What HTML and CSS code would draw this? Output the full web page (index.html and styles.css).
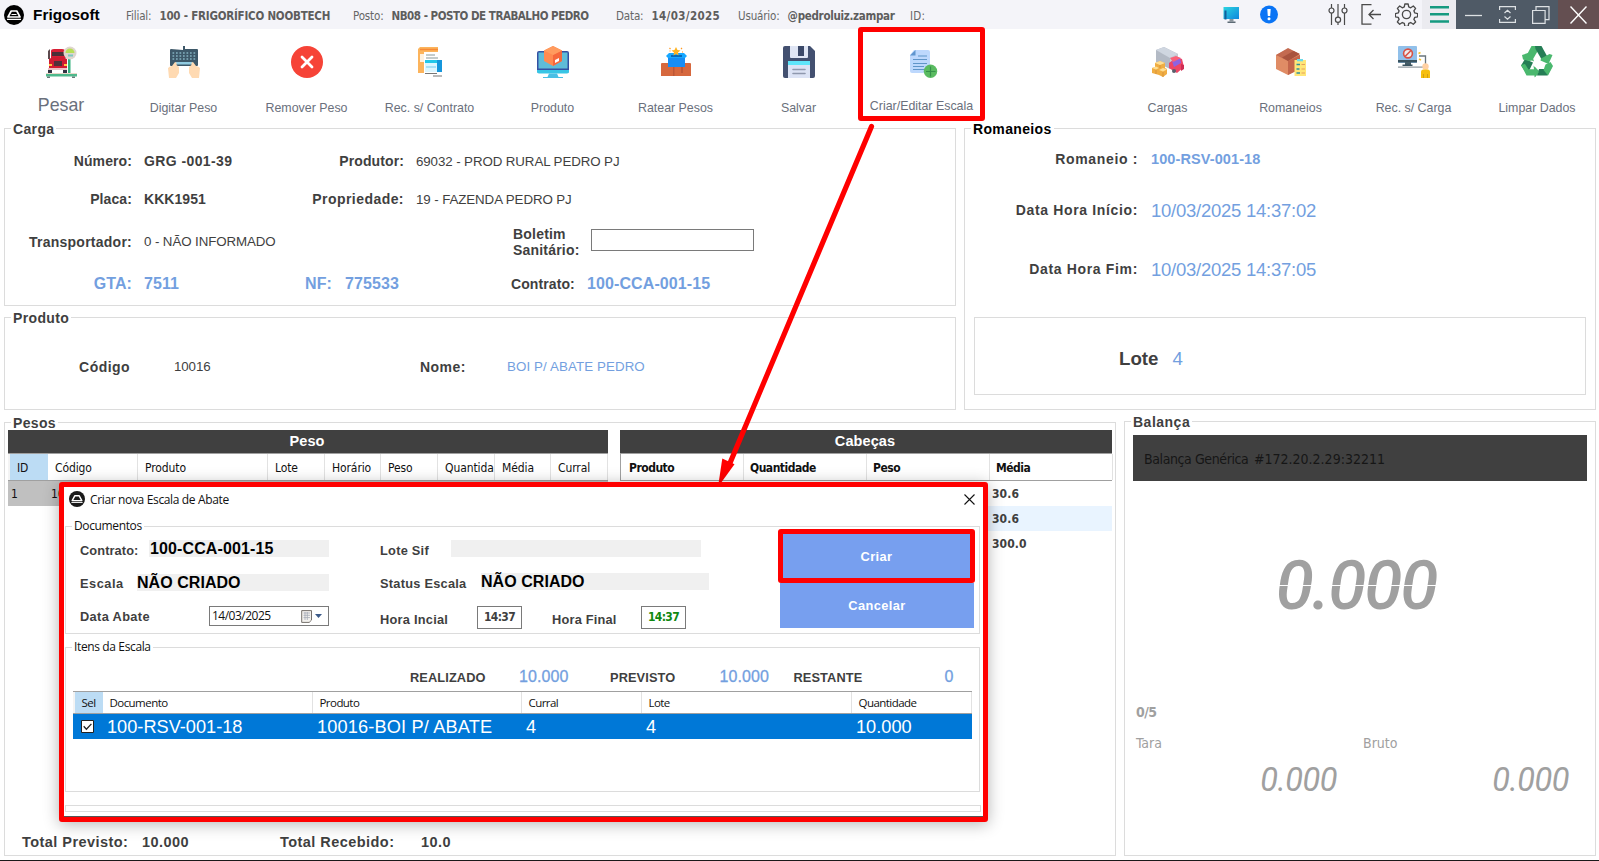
FILE: index.html
```html
<!DOCTYPE html>
<html lang="pt-BR">
<head>
<meta charset="utf-8">
<title>Frigosoft</title>
<link rel="stylesheet" href="styles.css">
</head>
<body>
<div class="app">
  <header class="topbar">
    <svg class="logo" viewBox="0 0 20 20"><circle cx="10" cy="10" r="10" fill="#000"/><path d="M7.200 6h5.600l3.200 6H4z" fill="none" stroke="#fff" stroke-width="1.700" stroke-linejoin="round"/><path d="M7.500 9.500h5M3 14.300h14" stroke="#fff" stroke-width="1.200"/></svg>
    <span class="brand">Frigosoft</span>
    <div class="info info-filial"><span>Filial:</span><b>100 - FRIGORÍFICO NOOBTECH</b></div>
    <div class="info info-posto"><span>Posto:</span><b>NB08 - POSTO DE TRABALHO PEDRO</b></div>
    <div class="info info-data"><span>Data:</span><b>14/03/2025</b></div>
    <div class="info info-user"><span>Usuário:</span><b>@pedroluiz.zampar</b></div>
    <div class="info info-id"><span>ID:</span></div>
    <div class="controls">
      <i class="ctl w37"><svg width="17" height="16" viewBox="0 0 17 16"><defs><linearGradient id="scr" x2="1" y2="1"><stop offset="0" stop-color="#2bd4e0"/><stop offset="1" stop-color="#0f86dd"/></linearGradient></defs><path d="M.5 0h15.500v12H.5z" fill="url(#scr)"/><path d="M1.500 3.500h2v9h-2z" fill="#125f9c"/><path d="M6.500 12h4v2.500h-4z" fill="#8a949c"/><path d="M4.500 14.500h8V16h-8z" fill="#5c6a75"/></svg></i>
      <i class="ctl w68"><svg width="18" height="19" viewBox="0 0 18 19"><circle cx="9" cy="9.500" r="9" fill="#0a74f5"/><path d="M7.300 4h3.400l-.5 7H7.800z" fill="#fff"/><circle cx="9" cy="13.800" r="1.500" fill="#fff"/></svg></i>
      <i class="ctl w33"><svg width="20" height="21" viewBox="0 0 20 21" fill="none" stroke="#4a4a4a" stroke-width="1.200"><path d="M3.500 0v4M3.500 9v12M10 0v13M10 18.500v2.500M16.500 0v4M16.500 9v12"/><circle cx="3.500" cy="6.500" r="2.500"/><circle cx="10" cy="15.700" r="2.600"/><circle cx="16.500" cy="6.500" r="2.500"/></svg></i>
      <i class="ctl w34"><svg width="21" height="21" viewBox="0 0 21 21" fill="none" stroke="#4a4a4a" stroke-width="1.300"><path d="M10.500.7H1v19.500h9.500M20 10.500H8M12.500 6L8 10.500l4.500 4.500"/></svg></i>
      <i class="ctl w27"><svg width="23" height="23" viewBox="0 0 24 24" fill="none" stroke="#4a4a4a" stroke-width="1.400" stroke-linejoin="round"><circle cx="12" cy="12" r="4.300"/><path d="M10.300 1h3.400l.6 3.100 2.100.9 2.700-1.800 2.400 2.400-1.800 2.600.9 2.200 3 .6v3.400l-3 .6-.9 2.200 1.800 2.600-2.400 2.400-2.700-1.800-2.100.9-.6 3.100h-3.400l-.6-3.100-2.100-.9-2.700 1.800-2.400-2.400 1.800-2.600-.9-2.200-3-.6V11l3-.6.9-2.200-1.800-2.600 2.400-2.400 2.700 1.800 2.100-.9z"/></svg></i>
      <i class="ctl menu"><svg width="19" height="17" viewBox="0 0 19 17"><path d="M0 1.250h19M0 8.250h19M0 15.500h19" stroke="#159a80" stroke-width="2.500"/></svg></i>
      <i class="ctl win"><svg width="17" height="18" viewBox="0 0 17 18"><path d="M0 9.500h17" stroke="#dde1e4" stroke-width="1.300"/></svg></i>
      <i class="ctl win"><svg width="17" height="18" viewBox="0 0 17 18" fill="none" stroke="#dde1e4" stroke-width="1.200"><path d="M.6 4V.6h15.800V4M.6 13v3.400h15.800V13M5.500 7l3-2.800 3 2.800M5.500 10.500l3 2.800 3-2.800"/></svg></i>
      <i class="ctl win"><svg width="18" height="18" viewBox="0 0 18 18" fill="none" stroke="#dde1e4" stroke-width="1.200"><path d="M.6 4.500h12.500v12.800H.6zM4 4.500V.6h13v13h-4"/></svg></i>
      <i class="ctl close"><svg width="17" height="18" viewBox="0 0 17 18"><path d="M.5.5l16 17M16.500.5l-16 17" stroke="#fff" stroke-width="1.400"/></svg></i>
    </div>
  </header>

  <nav class="toolbar">
    <div class="tool tool-big">
      <svg viewBox="0 0 32 32"><path d="M3 5l2-2v10H3zM20 3l2 2v7h-2z" fill="#5c4a4e"/><path d="M6 5q0-2 3-2h8q3 0 3 2v8H6z" fill="#d81f35"/><path d="M7 6h12v4H7z" fill="#4a3038"/><path d="M4 13l4-2h10l4 2v11H4z" fill="#d01c32"/><path d="M9 15h8v5H9z" fill="#50303a"/><path d="M4 18h3v2H4zM19 18h3v2h-3z" fill="#ffc83d"/><path d="M3 22h19v2H3z" fill="#edc0c4"/><path d="M3 24h4v3H3zM18 24h4v3h-4z" fill="#334"/><path d="M23 13h2.500v15H23z" fill="#34b07d"/><circle cx="25" cy="7" r="6.500" fill="#e0d6d0"/><path d="M20.500 7a4.500 4.500 0 0 1 9 0z" fill="#b8df58"/><path d="M23 8.500h5v2h-5z" fill="#7cc9bf"/><path d="M1 27h31v1H1z" fill="#e8d8c8"/><path d="M1 28h31v2.500H1z" fill="#4eb98d"/><path d="M2 30.500h3V32H2zM27 30.500h3V32h-3z" fill="#667b78"/></svg>
      <span>Pesar</span>
    </div>
    <div class="tool">
      <svg viewBox="0 0 32 32"><path d="M15 4V0h2v3h12q1 0 1 1v15q0 1-1 1H3q-1 0-1-1V4q0-1 1-1z" fill="#3d5869"/><path d="M4.500 7h23M4.500 10h23M4.500 13h23" stroke="#a5dceb" stroke-width="1.200" stroke-dasharray="1.700 1.800"/><path d="M8 16h16v2.500H8z" fill="#91cbe0"/><path d="M0 22q2-2 4-2l3-4q2 0 1.500 3l2.500 2v6l-3 5H1zM32 22q-2-2-4-2l-3-4q-2 0-1.500 3l-2.500 2v6l3 5h7z" fill="#ffdab2"/></svg>
      <span>Digitar Peso</span>
    </div>
    <div class="tool">
      <svg viewBox="0 0 32 32"><circle cx="16" cy="16" r="16" fill="#f64337"/><path d="M11 11l10 10M21 11L11 21" stroke="#fff" stroke-width="2.800" stroke-linecap="round"/></svg>
      <span>Remover Peso</span>
    </div>
    <div class="tool">
      <svg viewBox="0 0 32 32"><path d="M4 3l2-2h18v6h2v20H4z" fill="#fcb45c"/><path d="M6 3.500h18" stroke="#f78a35" stroke-width="1.500"/><path d="M6 8h6v8H6z" fill="#fff2df"/><path d="M10 6h16v24H10z" fill="#fff"/><path d="M12 9h9M12 12h12" stroke="#899" stroke-width="1"/><path d="M11 14h17v12H11z" fill="#dcf6ff"/><path d="M11 15.500h17" stroke="#22c7e8" stroke-width="3"/><path d="M23 14h5v12h-5z" fill="#1596dc"/><path d="M12 21h10" stroke="#75c9ed"/><path d="M11 27.500h12M19 30h9" stroke="#777" stroke-width="1.200"/></svg>
      <span>Rec. s/ Contrato</span>
    </div>
    <div class="tool">
      <svg viewBox="0 0 32 32"><rect y="5" width="32" height="22" rx="2" fill="#3450a2"/><path d="M1.500 6.500h29v16h-29z" fill="#5fbcd8"/><path d="M0 24h32v1.500q0 2-2 2H2q-2 0-2-2z" fill="#37c5e5"/><path d="M12 27.500h8l1.500 3.500H26v1H6v-1h4.500z" fill="#49bfe5"/><path d="M16 0l9 4.500v10.500L16 20l-9-5V4.500z" fill="#ff8a50"/><path d="M16 9l9-4.500V15l-9 5z" fill="#f5683c"/><path d="M7 4.500L16 0l9 4.500L16 9z" fill="#ff9b5e"/><path d="M18 14l4-2v3l-4 2z" fill="#fff"/></svg>
      <span>Produto</span>
    </div>
    <div class="tool">
      <svg viewBox="0 0 32 32"><path d="M1 18q0-1 1-1h28q1 0 1 1v12H1z" fill="#d6683e"/><path d="M13 17h1.500v13H13zM21 20h2v7h-2z" fill="#bd5736"/><path d="M8 10h17v11H8z" fill="#168df5"/><path d="M6 10l3-3h15l3 3-2 2H8z" fill="#17a7ff"/><path d="M11 9h11v2H11z" fill="#0869ba"/><path d="M16 1l1.500 3 3 .5-2.500 2 .5 3-2.500-1.500L13.500 9.500l.5-3-2.500-2 3-.5z" fill="#ffb31f"/><path d="M9.500 2l1 1M22 2l-1 1M9.500 5h1M22 6h1" stroke="#ff9922" stroke-width="1.200"/></svg>
      <span>Ratear Pesos</span>
    </div>
    <div class="tool">
      <svg viewBox="0 0 32 32"><path d="M2 0h25l5 5v25q0 2-2 2H2q-2 0-2-2V2q0-2 2-2z" fill="#435070"/><path d="M7 0h18v11q0 1-1 1H8q-1 0-1-1z" fill="#dfe5f4"/><path d="M15 0h6v10h-6z" fill="#3b4868"/><path d="M5 15h22v17H5z" fill="#dce3f5"/><path d="M5 15h22v4H5z" fill="#5fe5fa"/><path d="M10 23.500h12M10 27.500h12" stroke="#8f98ae" stroke-width="1.600" stroke-linecap="round"/></svg>
      <span>Salvar</span>
    </div>
    <div class="tool tool-marked">
      <svg viewBox="0 0 32 32"><path d="M8 4h14q2 0 2 2v21H6q-2 0-2-2V9z" fill="#bdd8fd"/><path d="M4 9.500L9.500 4v5.500z" fill="#5f95ce"/><path d="M12 10h9M7 13.500h14M7 17.500h14M7 20.500h11M7 23.500h11" stroke="#5f95c9" stroke-width="1.200"/><circle cx="24.500" cy="25.300" r="6.700" fill="#5abb61"/><path d="M20 25.500h9.500M24.500 20.500v10" stroke="#36914a" stroke-width="1.200"/></svg>
      <span>Criar/Editar Escala</span>
    </div>
    <div class="tool tool-empty"></div>
    <div class="tool">
      <svg viewBox="0 0 32 32"><path d="M4 4l8-3 14 7v10l-8 5-14-7z" fill="#b3bac5"/><path d="M4 4l8-3 14 7-8 4z" fill="#cfd6e0"/><path d="M18 12l8-4v10l-8 5z" fill="#c6cbd6"/><path d="M17 17l8-6 5 2 2 8-7 6-5-3-3-2z" fill="#ee4666"/><path d="M20 15l8-3 1 5-7 4z" fill="#8e62e2"/><path d="M18 12l6-2 5 2-8 4z" fill="#fa6078"/><circle cx="22" cy="25" r="2" fill="#58606c"/><path d="M29 18l3 1v4l-3 2z" fill="#ce2d55"/><path d="M3 17l5-2 5 2v5l2 1v5l-4 3-4-2-7-2v-5l3-1z" fill="#f0ad42"/><path d="M3 17l5-2 5 2-5 2zM0 22l4-1.500 3 1.500-3 1.500zM7 24l4-2 4 1.500-4 2z" fill="#ffdf94"/><path d="M8 19v3M4 24v4M11 26v5" stroke="#d9943a"/></svg>
      <span>Cargas</span>
    </div>
    <div class="tool">
      <svg viewBox="0 0 32 32"><path d="M1 9l12-6 12 6v14l-12 6L1 23z" fill="#e08c65"/><path d="M13 15l12-6v14l-12 6z" fill="#c4664b"/><path d="M1 9l12-7 12 6-12 7z" fill="#c36a50"/><path d="M7 11.500L18.500 5l6 3L13 15z" fill="#a9533d"/><path d="M19.500 14h11.500v16H19.500z" fill="#ffe678"/><path d="M22 13h6v2.300h-6z" fill="#6ddae8"/><path d="M21.500 18.500h3.500M21.500 23h3M21.500 27h3.500" stroke="#2f91a0" stroke-width="1.700"/><path d="M26.500 18.500h3.500M26.500 23h3.500M26.500 27h3.500" stroke="#e7a15b" stroke-width="1.200"/></svg>
      <span>Romaneios</span>
    </div>
    <div class="tool">
      <svg viewBox="0 0 32 32"><rect width="19" height="17" rx="1" fill="#91c0ea"/><path d="M0 14h19v2.500H0z" fill="#39535f"/><path d="M7 16h6v3H7z" fill="#455d68"/><path d="M4.500 18.500h10V20h-10z" fill="#39535f"/><path d="M0 20.500h25v1.200H0z" fill="#8c969c"/><circle cx="10" cy="7.500" r="4.400" fill="#eee" stroke="#d95245" stroke-width="1.600"/><path d="M7 10.500l6-6" stroke="#d95245" stroke-width="1.600"/><path d="M21 10h6.500v9" fill="none" stroke="#69757c" stroke-width="1.300"/><path d="M20.500 7.500l2-1M21 13l2 1" stroke="#f8c32a" stroke-width="1.500"/><circle cx="27.500" cy="20.500" r="3.200" fill="#ffd0a3"/><path d="M23 32v-6q0-2.500 2.500-2.500h4q2.500 0 2.500 2.500v6z" fill="#f6bf10"/><path d="M25.500 28v4M29.500 28v4" stroke="#d3a010"/></svg>
      <span>Rec. s/ Carga</span>
    </div>
    <div class="tool">
      <svg viewBox="0 0 32 32"><path d="M10.500 0H17l2 1-7.500 13L5 10.500z" fill="#4ab86e"/><path d="M14 0h6.500l5.500 10-5.500 3.200L14.500 3z" fill="#257d55"/><path d="M20 12.500l8.500-4.500 3 1-4 9-8-3.500z" fill="#4ab86e"/><path d="M4 13l8 3.500-4.500 9.500H4.500L0 19.500z" fill="#257d55"/><path d="M1 9l9-3 3 9.500-2-1-3 .5-6-1.500z" fill="#4ab86e"/><path d="M0 19l5.500 10.500H14V31l5-5-5-5v2.500H7.500L4 18z" fill="#4ab86e"/><path d="M18 23h9l4-2-4.500 8.500H16z" fill="#257d55"/><path d="M24.500 18.500l5-2.500L32 20l-5 9.500L22.500 24z" fill="#4ab86e"/><path d="M12.500 19.500l5.500 6.500-4.500 5.500V29H8l1-5.500h4z" fill="#4ab86e"/></svg>
      <span>Limpar Dados</span>
    </div>
  </nav>

  <main class="upper">
    <div class="left-stack">
      <section class="group carga">
        <h2>Carga</h2>
        <div class="row row-party h48"><label>Número:</label><b>GRG -001-39</b><label>Produtor:</label><span>69032 - PROD RURAL PEDRO PJ</span></div>
        <div class="row row-party h28"><label>Placa:</label><b class="plate">KKK1951</b><label class="loose">Propriedade:</label><span>19 - FAZENDA PEDRO PJ</span></div>
        <div class="row row-boletim"><label class="carrier">Transportador:</label><span>0 - NÃO INFORMADO</span><label class="two-line">Boletim<br>Sanitário:</label><input class="box-input" type="text" aria-label="Boletim Sanitário"></div>
        <div class="row row-gta"><label class="link">GTA:</label><b class="link">7511</b><b class="link">NF:</b><b class="link">775533</b><label class="contract">Contrato:</label><b class="link">100-CCA-001-15</b></div>
      </section>
      <section class="group produto">
        <h2>Produto</h2>
        <div class="row row-produto"><label class="loose">Código</label><span>10016</span><b class="loose">Nome:</b><span class="blue">BOI P/ ABATE PEDRO</span></div>
      </section>
    </div>
    <section class="group romaneios">
      <h2>Romaneios</h2>
      <div class="row rom-row h44"><label>Romaneio :</label><b class="blue rsv">100-RSV-001-18</b></div>
      <div class="row rom-row h57"><label>Data Hora Início:</label><span class="blue big">10/03/2025 14:37:02</span></div>
      <div class="row rom-row h62"><label>Data Hora Fim:</label><span class="blue big">10/03/2025 14:37:05</span></div>
      <div class="lote"><b>Lote</b><span class="blue">4</span></div>
    </section>
  </main>

  <main class="lower">
    <section class="group pesos">
      <h2>Pesos</h2>
      <div class="tables">
        <div class="table peso">
          <div class="bar">Peso</div>
          <div class="thead"><span class="hot">ID</span><span>Código</span><span>Produto</span><span>Lote</span><span>Horário</span><span>Peso</span><span>Quantida</span><span>Média</span><span>Curral</span></div>
          <div class="trow picked"><span>1</span><span>10016</span></div>
        </div>
        <div class="table cabecas">
          <div class="bar">Cabeças</div>
          <div class="thead"><span>Produto</span><span>Quantidade</span><span>Peso</span><span>Média</span></div>
          <div class="trow"><span>30.6</span></div>
          <div class="trow alt"><span>30.6</span></div>
          <div class="trow"><span>300.0</span></div>
        </div>
      </div>
      <div class="totals"><b>Total Previsto:</b><b>10.000</b><b>Total Recebido:</b><b>10.0</b></div>
    </section>
    <section class="group balanca">
      <h2>Balança</h2>
      <div class="scale-name"><span>Balança Genérica</span><span class="addr">#172.20.2.29:32211</span></div>
      <div class="lcd lcd-main"><span>0.000</span></div>
      <div class="reads">0/5</div>
      <div class="pair pair-names"><span>Tara</span><span>Bruto</span></div>
      <div class="pair pair-values"><span class="lcd lcd-tara">0.000</span><span class="lcd lcd-bruto">0.000</span></div>
    </section>
  </main>

  <svg class="arrow" viewBox="0 0 170 370"><path d="M163.500 6.500L22 343" stroke="#f00" stroke-width="5.200" stroke-linecap="round"/><path d="M10 367l4.300-28.500 12.200 5.700z" fill="#f00"/></svg>

  <div class="dialog">
    <div class="dlg-title">
      <svg width="16" height="16" viewBox="0 0 20 20"><circle cx="10" cy="10" r="10" fill="#1a1a1a"/><path d="M7.200 6h5.600l3.200 6H4z" fill="none" stroke="#fff" stroke-width="1.800" stroke-linejoin="round"/><path d="M3 14.300h14" stroke="#fff" stroke-width="1.200"/></svg>
      <span>Criar nova Escala de Abate</span>
      <svg class="dlg-x" width="11" height="11" viewBox="0 0 11 11"><path d="M.5.5l10 10M10.500.5l-10 10" stroke="#111" stroke-width="1.100"/></svg>
    </div>
    <section class="group documentos">
      <h3>Documentos</h3>
      <div class="doc-grid">
        <div class="doc-left">
          <div class="doc-row"><label>Contrato:</label><b class="field w180">100-CCA-001-15</b></div>
          <div class="doc-row row-escala"><label>Escala</label><b class="field w192">NÃO CRIADO</b></div>
          <div class="doc-row"><label>Data Abate</label><div class="date"><span>14/03/2025</span><svg width="21" height="13" viewBox="0 0 21 13"><path d="M.7.600h9.800v9.500L8.200 12.400H.7z" fill="#f3f1ee" stroke="#75706c"/><path d="M2.500 3h6.500M2.500 5.300h6.500M2.500 7.600h6.500M4 2v8M6.300 2v8" stroke="#a4a9b5" stroke-width=".8"/><path d="M14 4h7l-3.500 4z" fill="#3c5a88"/></svg></div></div>
        </div>
        <div class="doc-mid">
          <div class="doc-row"><label class="l71">Lote Sif</label><b class="field w250"></b></div>
          <div class="doc-row"><label class="l101">Status Escala</label><b class="field w228">NÃO CRIADO</b></div>
          <div class="doc-row tall"><label class="l97">Hora Incial</label><span class="time">14:37</span><label class="l89">Hora Final</label><span class="time green">14:37</span></div>
        </div>
        <div class="actions"><button class="btn create">Criar</button><button class="btn cancel">Cancelar</button></div>
      </div>
    </section>
    <section class="group itens">
      <h3>Itens da Escala</h3>
      <div class="sums"><b>REALIZADO</b><span>10.000</span><b>PREVISTO</b><span>10.000</span><b>RESTANTE</b><span>0</span></div>
      <div class="item-table">
        <div class="thead"><span class="hot">Sel</span><span>Documento</span><span>Produto</span><span>Curral</span><span>Lote</span><span>Quantidade</span></div>
        <div class="item-row"><span><svg width="13" height="13" viewBox="0 0 13 13"><path d="M.5.500h12v12H.5z" fill="#fff" stroke="#222"/><path d="M2.700 6.300l2.700 2.900 5-5.300" fill="none" stroke="#222" stroke-width="1.300"/></svg></span><span>100-RSV-001-18</span><span>10016-BOI P/ ABATE</span><span>4</span><span>4</span><span>10.000</span></div>
      </div>
    </section>
    <div class="strip"></div>
    <div class="dlg-edge"></div>
  </div>
</div>
</body>
</html>
```
FILE: styles.css
```css
* { box-sizing: border-box; }
body { margin: 0; background: #fff; color: #3f3f3f; font: 13.33px "Liberation Sans", Arial, sans-serif; }
h2, h3 { margin: 0; }
.app { position: relative; width: 1599px; height: 861px; overflow: hidden; border-bottom: 1px solid #1a1a1a; display: flex; flex-direction: column; white-space: nowrap; }

/* Title bar */
.topbar { height: 29px; flex: none; background: #f4f4f9; display: flex; align-items: center; padding-left: 4px; font: 11.5px "DejaVu Sans Condensed", "DejaVu Sans", sans-serif; color: #666; }
.logo { width: 20px; height: 20px; margin-right: 9px; }
.brand { width: 93px; font: bold 15.3px "Liberation Sans", sans-serif; letter-spacing: .05px; color: #000; padding-top: 1px; }
.info { display: flex; gap: 8px; padding-top: 2px; letter-spacing: -.15px; }
.info b { color: #5d5d5d; letter-spacing: -.22px; }
.info-filial { width: 227px; }
.info-posto { width: 263px; }
.info-posto b { letter-spacing: -.48px; }
.info-data { width: 122px; }
.info-data b { letter-spacing: .35px; }
.info-user { width: 172px; }
.info-user b { letter-spacing: -.3px; }
.info-id { letter-spacing: .3px; }
.controls { display: flex; height: 29px; margin-left: auto; }
.ctl { display: flex; align-items: center; }
.w37 { width: 37px; } .w68 { width: 68px; } .w33 { width: 33px; } .w34 { width: 34px; } .w27 { width: 27px; }
.menu { width: 34px; justify-content: center; background: #ebebf0; }
.win { width: 34px; justify-content: center; background: #4f5a66; }
.close { width: 41px; justify-content: center; background: #644f51; }

/* Toolbar */
.toolbar { height: 99px; flex: none; display: grid; grid-template-columns: 122px repeat(11, 123px) 124px; color: #6a707c; font-size: 12.4px; }
.tool { display: flex; flex-direction: column; align-items: center; padding-top: 17px; }
.tool svg { width: 32px; height: 32px; }
.tool span { margin-top: 22px; line-height: 16px; }
.tool-big span { font-size: 17.8px; margin-top: 18px; line-height: 18px; }
.tool-marked { width: 127px; height: 94px; margin: -2px 0 0 -2px; padding-top: 14px; border: 5px solid #f00; border-radius: 3px; }
.tool-marked span { margin-top: 20px; }

/* Framed groups */
.group { border: 1px solid #dcdcdc; }
.group > h2 { width: fit-content; height: 16px; line-height: 16px; margin: -8px 0 0 6px; padding: 0 2px; background: #fff; font-size: 14px; letter-spacing: .35px; }
.group > h3 { width: fit-content; height: 16px; line-height: 16px; margin: -9px 0 0 6px; padding: 0 2px; background: #fff; color: #111; font: 12px/16px "Open Sans", "Noto Sans", sans-serif; letter-spacing: -.37px; }
.row { display: grid; align-items: center; column-gap: 12px; letter-spacing: -.1px; }
.row label, .row b { font-weight: bold; font-size: 14px; letter-spacing: .1px; }
.row b { letter-spacing: .4px; }
.row label { text-align: right; }
.row .loose { letter-spacing: .45px; }
.row .plate { letter-spacing: .05px; }
.row .carrier { letter-spacing: .25px; }
.row .contract { letter-spacing: .1px; text-align: left; margin-left: -1px; }
.blue { color: #739fdf; }
.row .link { color: #739fdf; font-size: 16px; letter-spacing: .1px; }
.h48 { height: 48px; } .h28 { height: 28px; } .h44 { height: 44px; } .h57 { height: 57px; } .h62 { height: 62px; }

.upper { display: grid; grid-template-columns: 952px 632px; gap: 8px; padding-left: 4px; flex: none; height: 282px; }
.left-stack { display: flex; flex-direction: column; gap: 11px; }
.carga { height: 178px; }
.row-party { grid-template-columns: 127px 156px 92px 1fr; }
.row-boletim { height: 57px; grid-template-columns: 127px 357px 66px 163px; }
.row .two-line { text-align: left; line-height: 16px; letter-spacing: .2px; }
.box-input { width: 163px; height: 22px; border: 1px solid #7a7a7a; margin-bottom: 3px; padding: 0; }
.row-gta { height: 27px; grid-template-columns: 127px 149px 28px 155px 63px 1fr; }
.produto { height: 93px; }
.row-produto { height: 81px; grid-template-columns: 125px 202px 43px 1fr; column-gap: 44px; }
.row-produto .blue { letter-spacing: .1px; }
.romaneios > h2 { color: #000; }
.rom-row { grid-template-columns: 173px 1fr; column-gap: 13px; }
.rom-row label { letter-spacing: .65px; }
.row .rsv { font-size: 14.5px; letter-spacing: .1px; }
.big { font-size: 18.5px; letter-spacing: -.25px; padding-top: 2px; }
.lote { margin: 17px 9px 0; height: 78px; border: 1px solid #dcdcdc; padding: 5px 0 0 144px; display: flex; align-items: center; gap: 14px; font-size: 18.7px; }

/* Weights and scale */
.lower { display: grid; grid-template-columns: 1112px 472px; gap: 8px; padding: 12px 0 0 4px; height: 446px; flex: none; }
.pesos { display: flex; flex-direction: column; }
.tables { flex: 1; display: grid; grid-template-columns: 600px 492px; gap: 12px; padding-left: 3px; margin-top: -1px; }
.bar { height: 23px; background: #404040; color: #fff; font-weight: bold; font-size: 14.5px; line-height: 23px; text-align: center; }
.table { font: 12px "DejaVu Sans Condensed", "DejaVu Sans", sans-serif; letter-spacing: -.1px; color: #111; }
.table .bar { font-family: "Liberation Sans", sans-serif; letter-spacing: .1px; padding-right: 2px; }
.thead { display: grid; border-top: 1px solid #a0a0a0; border-bottom: 1px solid #a0a0a0; background: #fff; }
.thead span { border-right: 1px solid #e2e2e2; padding-left: 7px; overflow: hidden; }
.thead .hot { background: #bcdcf4; border-left: 2px solid #f4f4f4; border-right: 0; }
.table .thead { height: 28px; line-height: 28px; }
.peso .thead, .peso .trow { grid-template-columns: 40px 90px 130px 57px 56px 57px 57px 56px 57px; }
.cabecas .thead { grid-template-columns: repeat(4, 123px); font-weight: bold; letter-spacing: -.5px; border-left: 1px solid #a0a0a0; }
.cabecas .thead span { padding-left: 6px; }
.cabecas .thead span:first-child { padding-left: 8px; }
.trow { height: 25px; line-height: 27px; }
.peso .trow { display: grid; }
.picked { background: #c0c0c0; }
.picked span { padding-left: 3px; }
.cabecas .trow { padding-left: 372px; color: #404040; font-weight: bold; letter-spacing: .1px; }
.alt { background: #e9f4ff; }
.totals { height: 26px; padding-left: 17px; display: grid; grid-template-columns: 120px 138px 141px 1fr; align-items: center; font-size: 14.5px; letter-spacing: .45px; }

.balanca { margin-top: -1px; color: #a0a0a0; font: 14px "DejaVu Sans Condensed", "DejaVu Sans", sans-serif; }
.balanca > h2 { color: #3f3f3f; font-family: "Liberation Sans", sans-serif; letter-spacing: .5px; }
.scale-name { height: 46px; margin: 5px 8px 0; padding: 2px 0 0 11px; display: flex; align-items: center; background: #404040; color: #161616; letter-spacing: -.4px; }
.scale-name span:first-child { width: 110px; }
.scale-name .addr { letter-spacing: 0; }
.lcd { font-family: Roboto, sans-serif; font-style: italic; }
.lcd-main { height: 209px; display: flex; align-items: center; justify-content: center; padding-right: 8px; font-size: 69px; font-weight: 500; letter-spacing: -2px; -webkit-mask-image: linear-gradient(#000 104px, transparent 104px, transparent 105px, #000 105px); mask-image: linear-gradient(#000 104px, transparent 104px, transparent 105px, #000 105px); }
.reads { height: 44px; line-height: 45px; padding-left: 11px; font-weight: bold; font-size: 14px; letter-spacing: -.5px; }
.pair { display: grid; grid-template-columns: 227px 227px; padding-left: 8px; }
.pair-names { height: 18px; line-height: 18px; }
.pair-names span { padding-left: 3px; letter-spacing: 0; }
.pair-values { height: 55px; align-items: center; font-size: 32.5px; text-align: right; letter-spacing: -.5px; }
.lcd-tara { padding-right: 23px; }
.lcd-bruto { padding-right: 18px; }

.arrow { position: absolute; left: 708px; top: 119.500px; width: 170px; height: 370px; }

/* Dialog */
.dialog { position: absolute; left: 59px; top: 482px; width: 929px; height: 340px; border: 5px solid #f00; border-radius: 3px; background: #fff; box-shadow: 0 2px 16px rgba(0, 0, 0, .3); display: flex; flex-direction: column; }
.dlg-title { height: 24px; padding: 0 8px 0 5px; display: flex; align-items: center; color: #111; font: 12px "Open Sans", "Noto Sans", sans-serif; letter-spacing: -.35px; }
.dlg-title span { margin-left: 5px; }
.dlg-x { margin-left: auto; }
.documentos { margin: 15px 3px 0 1px; height: 108px; }
.doc-grid { display: grid; grid-template-columns: 249px 449px 197px; padding-left: 14px; }
.doc-mid { margin-left: 51px; width: 329px; }
.doc-left, .doc-mid { padding-top: 6px; display: flex; flex-direction: column; }
.doc-row { display: flex; align-items: center; height: 17px; font-size: 12.8px; }
.doc-row label { font-weight: bold; padding-top: 3px; letter-spacing: .25px; }
.doc-left .doc-row { justify-content: space-between; margin-bottom: 17px; }
.doc-left .doc-row:first-child label { letter-spacing: .1px; }
.doc-left .row-escala { margin-bottom: 15px; }
.doc-left .row-escala label { padding-top: 1px; letter-spacing: .5px; }
.doc-left .doc-row:last-child { height: 20px; margin: 0; }
.doc-left .doc-row:last-child label { padding-top: 1px; letter-spacing: .35px; }
.doc-mid .doc-row { margin-bottom: 16px; }
.doc-mid .tall { height: 23px; margin: 0; }
.doc-mid .l89 { letter-spacing: .2px; }
.field { height: 17px; line-height: 18px; background: #f0f0f0; color: #000; font-size: 16px; padding-left: 1px; letter-spacing: .05px; }
.w192, .w228 { padding-left: 0; }
.w180 { width: 180px; letter-spacing: .12px; } .w192 { width: 192px; } .w250 { width: 250px; } .w228 { width: 228px; }
.l71 { width: 71px; } .l101 { width: 101px; } .l97 { width: 97px; } .l89 { width: 89px; margin-left: 30px; }
.date { width: 120px; height: 20px; border: 1px solid #7a7a7a; display: flex; align-items: center; justify-content: space-between; padding: 0 6px 0 2px; color: #111; font: 12px "Open Sans", "Noto Sans", sans-serif; letter-spacing: -.5px; }
.date span { margin-top: -2px; }
.time { width: 45px; height: 23px; border: 1px solid #7a7a7a; text-align: center; font: bold 12px/20px "DejaVu Sans Condensed", "DejaVu Sans", sans-serif; letter-spacing: -.65px; }
.green { color: #108810; }
.actions { margin-top: -5px; display: flex; flex-direction: column; }
.btn { border: 0; padding: 0; background: #779fef; color: #fff; font: bold 12.8px "Liberation Sans", sans-serif; letter-spacing: .4px; }
.create { height: 54px; border: 5px solid #f00; border-radius: 3px; }
.cancel { height: 45px; margin: 0 1px 0 2px; }
.itens { margin: 13px 3px 0 1px; height: 145px; }
.itens .sums { letter-spacing: .1px; }
.sums { height: 36px; padding: 8px 0 0 344px; display: grid; grid-template-columns: 109px 91px 109.500px 74px 151px 1fr; align-items: center; font-size: 12.8px; }
.sums b { padding-top: 1px; }
.sums span { color: #739fdf; font-size: 16px; -webkit-text-stroke: .3px #739fdf; }
.item-table { width: 899px; margin-left: 7px; }
.item-table .thead, .item-row { display: grid; grid-template-columns: 30px 210px 209px 120px 210px 120px; }
.item-table .thead { height: 23px; color: #111; font: 11.5px/21px "Open Sans", "Noto Sans", sans-serif; letter-spacing: -.55px; }
.item-table .thead span { padding-left: 6.500px; }
.item-row { height: 25px; line-height: 27px; background: #0078d7; color: #fff; font-size: 18.2px; }
.item-row span { padding-left: 4px; }
.item-row span:nth-child(3) { letter-spacing: .15px; }
.item-row span:first-child { padding: 6px 0 0 8px; line-height: 0; }
.strip { height: 7px; margin: 13px 2px 0 1px; border: 1px solid #dcdcdc; }
.dlg-edge { height: 1px; margin-top: auto; background: #555; }
```
